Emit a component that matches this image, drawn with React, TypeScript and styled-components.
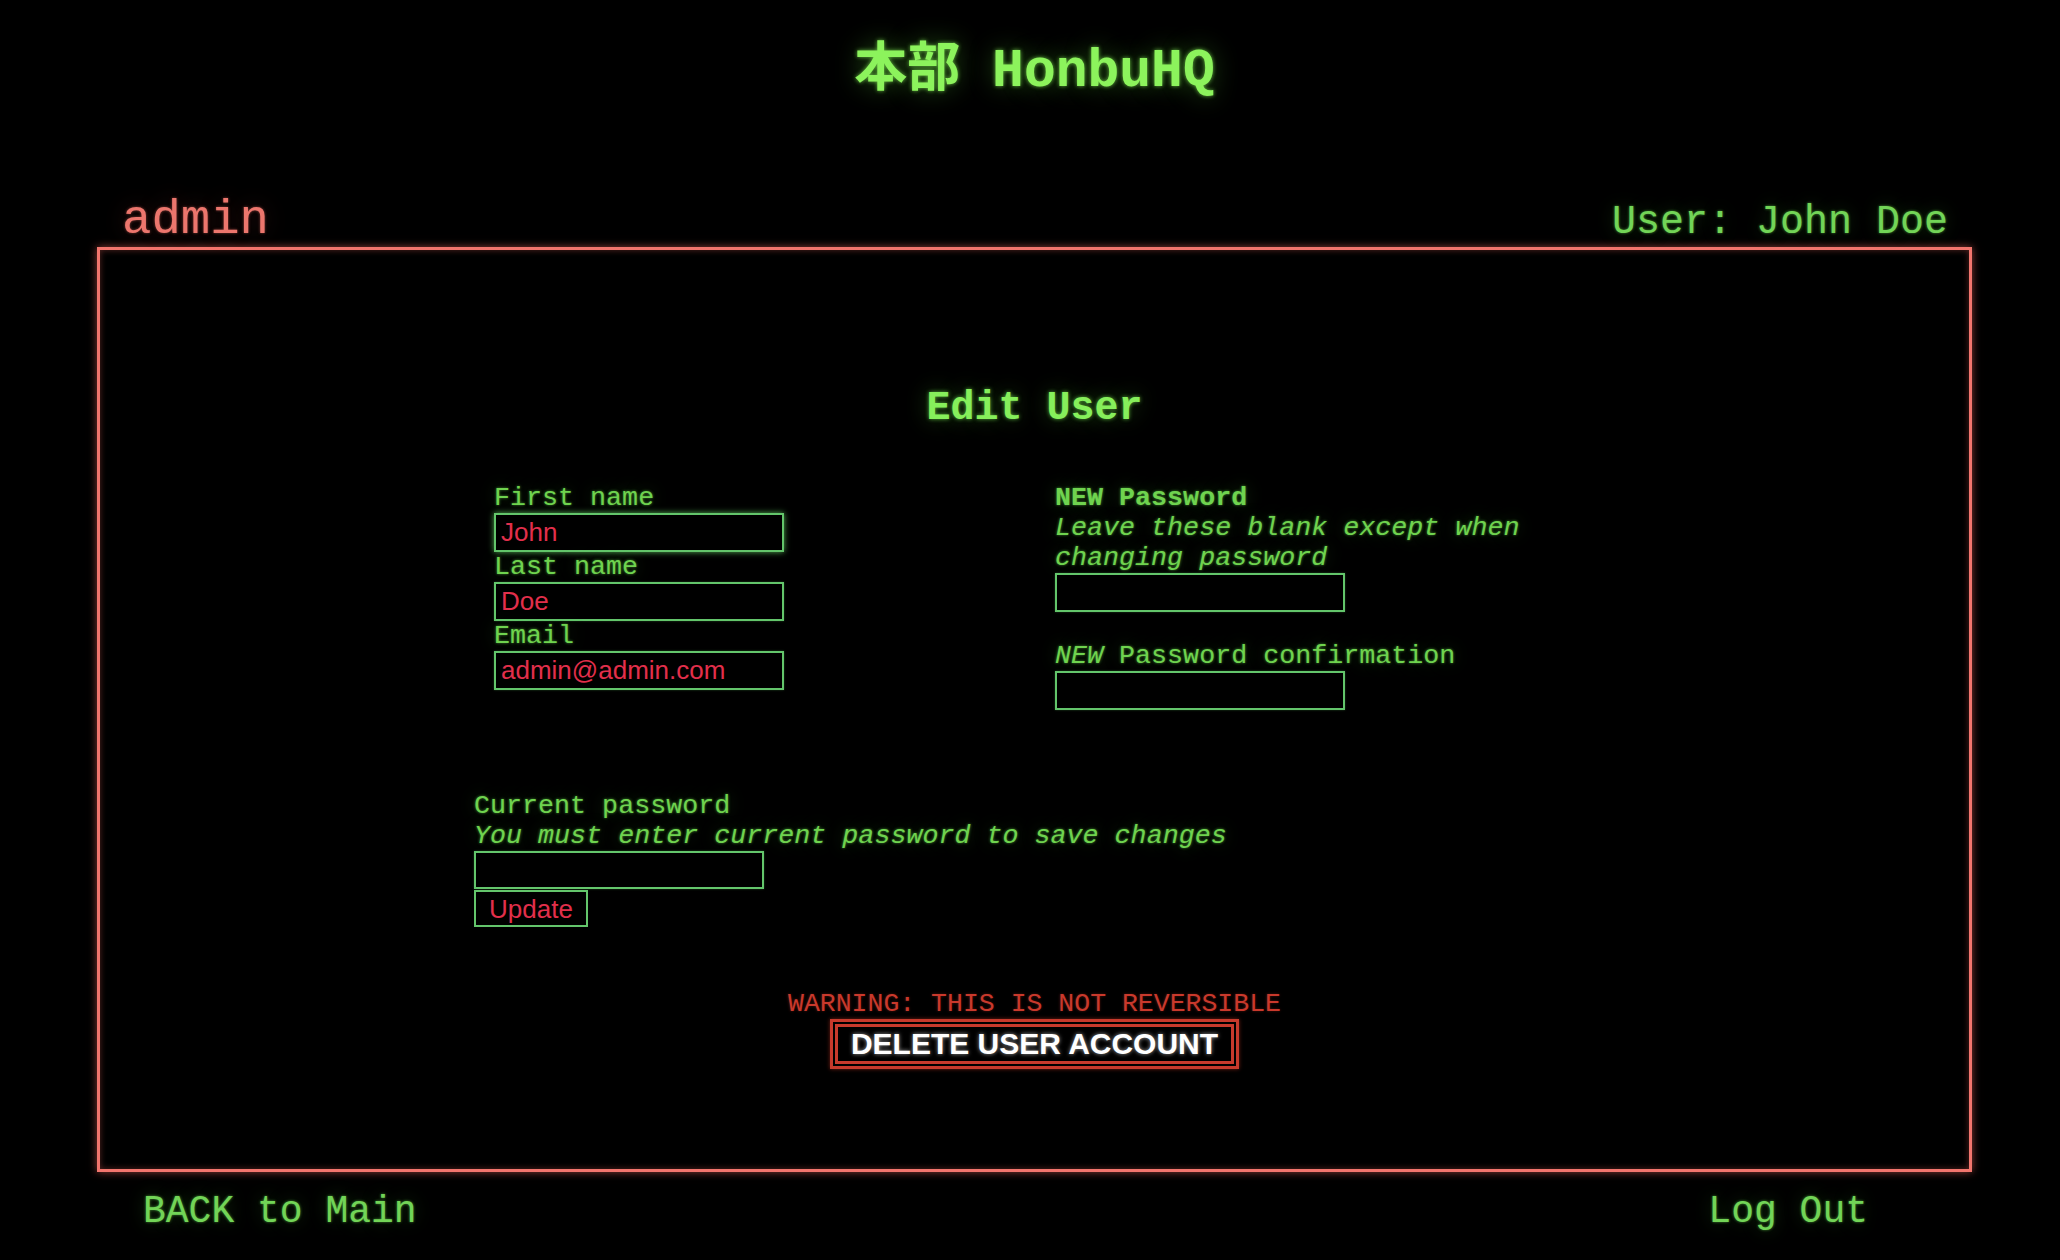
import styled, { createGlobalStyle, css } from "styled-components";

const GlobalStyle = createGlobalStyle`
  html, body {
    margin: 0;
    padding: 0;
    background: #000;
  }

  body {
    font-family: "Liberation Mono", "DejaVu Sans Mono", monospace;
    color: #6fd34f;
  }
`;

const greenGlow = css`
  text-shadow: 0 0 3px rgba(120, 255, 90, 0.55), 0 0 18px rgba(90, 220, 70, 0.25);
`;

const Page = styled.div`
  width: 1875px;
  margin-left: 97px;
  padding-top: 37px;
  padding-bottom: 20px;
`;

const SiteTitle = styled.h1`
  margin: 0;
  height: 159px;
  text-align: center;
  font-family: "Liberation Mono", "Noto Sans CJK JP", monospace;
  font-size: 53px;
  line-height: 70px;
  font-weight: bold;
  color: #8cf35c;
  text-shadow: 0 0 4px rgba(140, 255, 90, 0.7), 0 0 26px rgba(110, 240, 70, 0.35);
`;

const TopBar = styled.div`
  display: flex;
  justify-content: space-between;
  align-items: baseline;
  padding: 0 24px 0 25px;
  line-height: 48px;
`;

const Role = styled.span`
  font-size: 49px;
  color: #ec766d;
  text-shadow: 0 0 3px rgba(255, 120, 110, 0.5), 0 0 24px rgba(255, 100, 90, 0.2);
`;

const UserName = styled.span`
  font-size: 40px;
  color: #72d457;
  ${greenGlow}
`;

const Frame = styled.section`
  border: 3px solid #f2756d;
  box-shadow: 0 0 8px rgba(255, 110, 100, 0.55), inset 0 0 6px rgba(255, 110, 100, 0.35);
  padding: 135px 0 100px;
`;

const Heading = styled.h2`
  margin: 0 0 50px;
  text-align: center;
  font-size: 40px;
  line-height: 48px;
  font-weight: bold;
  color: #86ef5b;
  text-shadow: 0 0 4px rgba(130, 255, 90, 0.65), 0 0 22px rgba(110, 240, 70, 0.3);
`;

const FormArea = styled.form`
  padding-left: 374px;
  font-size: 26.7px;
  line-height: 30px;
  color: #6fd34f;
  ${greenGlow}
`;

const Columns = styled.div`
  display: grid;
  grid-template-columns: 581px 1fr;
  align-items: start;
`;

const Column = styled.div<{ $indent?: number }>`
  display: flex;
  flex-direction: column;
  align-items: flex-start;
  padding-left: ${(p) => p.$indent ?? 0}px;
`;

const Label = styled.label<{ $bold?: boolean }>`
  display: block;
  font-weight: ${(p) => (p.$bold ? "bold" : "normal")};

  em {
    font-style: italic;
  }
`;

const Hint = styled.span<{ $wrap?: number }>`
  display: block;
  max-width: ${(p) => (p.$wrap ? `${p.$wrap}px` : "none")};
  font-style: italic;
`;

const Spacer = styled.div`
  height: 29px;
`;

const TextInput = styled.input<{ $glow?: boolean; $height?: number }>`
  box-sizing: border-box;
  width: 290px;
  height: ${(p) => p.$height ?? 39}px;
  margin: 0;
  padding: 0 5px;
  background: #000;
  border: 2px solid #63c56b;
  outline: none;
  font-family: "Liberation Sans", Arial, sans-serif;
  font-size: 26px;
  color: #e22f4b;
  caret-color: #e22f4b;
  text-shadow: none;
  box-shadow: ${(p) =>
    p.$glow ? "0 0 6px rgba(110, 230, 110, 0.75)" : "0 0 2px rgba(110, 230, 110, 0.3)"};
`;

const CurrentBlock = styled.div`
  margin-top: 81px;
  display: flex;
  flex-direction: column;
  align-items: flex-start;
`;

const UpdateButton = styled.button`
  box-sizing: border-box;
  height: 37px;
  margin-top: 1px;
  padding: 0 13px;
  background: #000;
  border: 2px solid #63c56b;
  font-family: "Liberation Sans", Arial, sans-serif;
  font-size: 26px;
  line-height: 30px;
  color: #e22f4b;
  text-shadow: none;
  cursor: pointer;
`;

const DangerZone = styled.div`
  margin-top: 62px;
  display: flex;
  flex-direction: column;
  align-items: center;
`;

const Warning = styled.div`
  font-size: 26.5px;
  line-height: 30px;
  color: #c9392c;
  text-shadow: 0 0 3px rgba(230, 60, 40, 0.35);
`;

const DeleteButton = styled.button`
  box-sizing: border-box;
  height: 50px;
  padding: 0 13px;
  background: #000;
  border: 8px double #c73a2c;
  box-shadow: 0 0 4px rgba(230, 60, 40, 0.5);
  font-family: "Liberation Sans", Arial, sans-serif;
  font-weight: bold;
  font-size: 30px;
  line-height: 34px;
  color: #fff;
  text-shadow: 0 0 4px rgba(255, 255, 255, 0.6);
  cursor: pointer;
`;

const BottomBar = styled.nav`
  display: flex;
  justify-content: space-between;
  padding: 17px 104px 0 46px;
  font-size: 38px;
  line-height: 45px;
`;

const NavLink = styled.a`
  color: #72d457;
  text-decoration: none;
  ${greenGlow}
`;

export default function App() {
  return (
    <>
      <GlobalStyle />
      <Page>
        <SiteTitle>本部 HonbuHQ</SiteTitle>
        <TopBar>
          <Role>admin</Role>
          <UserName>User: John Doe</UserName>
        </TopBar>
        <Frame>
          <Heading>Edit User</Heading>
          <FormArea onSubmit={(e) => e.preventDefault()}>
            <Columns>
              <Column $indent={20}>
                <Label htmlFor="first">First name</Label>
                <TextInput id="first" $glow defaultValue="John" />
                <Label htmlFor="last">Last name</Label>
                <TextInput id="last" defaultValue="Doe" />
                <Label htmlFor="email">Email</Label>
                <TextInput id="email" defaultValue="admin@admin.com" />
              </Column>
              <Column>
                <Label htmlFor="pw" $bold>
                  NEW Password
                </Label>
                <Hint $wrap={520}>Leave these blank except when changing password</Hint>
                <TextInput id="pw" type="password" />
                <Spacer />
                <Label htmlFor="pwc">
                  <em>NEW</em> Password confirmation
                </Label>
                <TextInput id="pwc" type="password" />
              </Column>
            </Columns>
            <CurrentBlock>
              <Label htmlFor="cur">Current password</Label>
              <Hint>You must enter current password to save changes</Hint>
              <TextInput id="cur" type="password" $height={38} />
              <UpdateButton type="submit">Update</UpdateButton>
            </CurrentBlock>
          </FormArea>
          <DangerZone>
            <Warning>WARNING: THIS IS NOT REVERSIBLE</Warning>
            <DeleteButton type="button">DELETE USER ACCOUNT</DeleteButton>
          </DangerZone>
        </Frame>
        <BottomBar>
          <NavLink href="#">BACK to Main</NavLink>
          <NavLink href="#">Log Out</NavLink>
        </BottomBar>
      </Page>
    </>
  );
}
